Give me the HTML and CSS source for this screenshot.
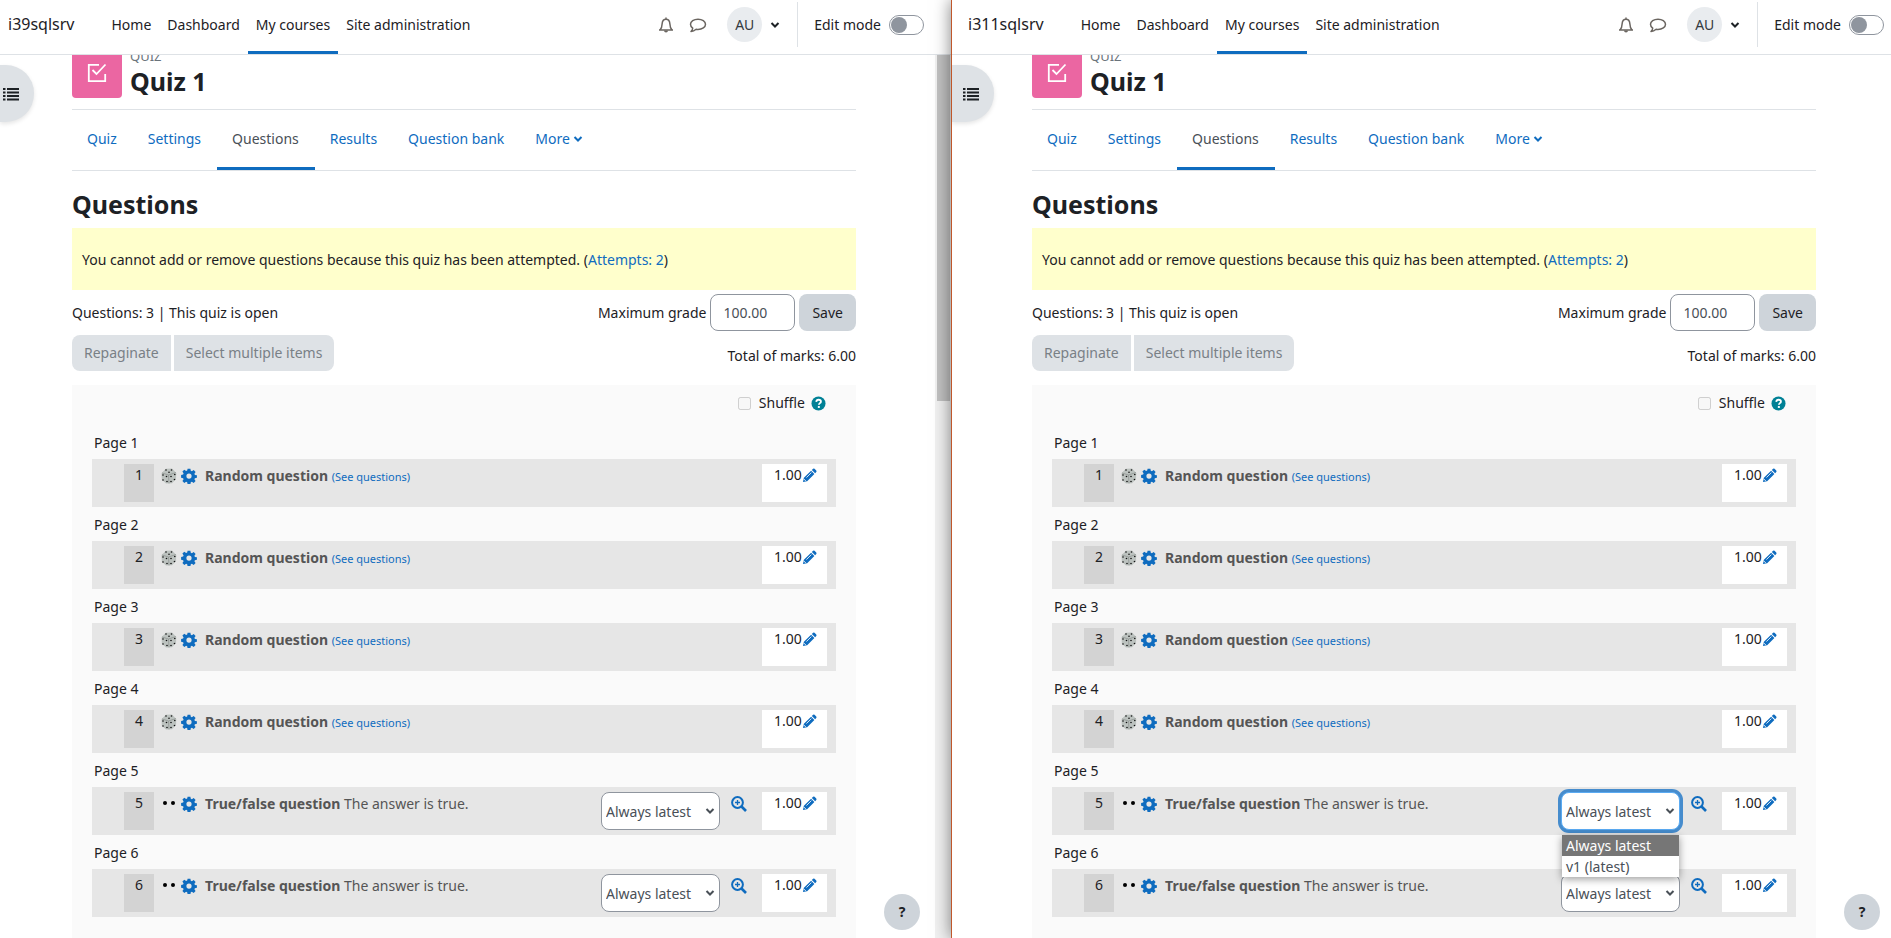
FILE: index.html
```html
<!DOCTYPE html>
<html lang="en">
<head>
<meta charset="utf-8">
<title>Quiz 1: Questions</title>
<link rel="stylesheet" href="styles.css">
</head>
<body>
<svg class="sprite" aria-hidden="true">
  <symbol id="bell" viewBox="0 0 16 16"><path d="M1 13h14M2 13c1.800-1.600 2-3.600 2.100-6C4.300 4 5.600 2.300 8 2.300S11.700 4 11.900 7c.1 2.400.3 4.400 2.100 6M8 2.300V.6" fill="none" stroke="currentColor" stroke-width="1.500"/><path d="M6 13.500a2 2 0 0 0 4 0z" fill="currentColor"/></symbol>
  <symbol id="comment" viewBox="0 0 18 16"><path d="M9 2.200c4.200 0 7.500 2.200 7.500 5.100s-3.300 5.100-7.500 5.100q-1 0-1.900-.2C5.600 13.500 4 14.300 2 14.500c1-1 1.600-1.900 1.700-3.300C2.300 10.200 1.500 8.800 1.500 7.300 1.500 4.400 4.800 2.200 9 2.200z" fill="none" stroke="currentColor" stroke-width="1.500" stroke-linejoin="round"/></symbol>
  <symbol id="caret" viewBox="0 0 10 8"><path d="M1.500 2 5 5.500 8.500 2" fill="none" stroke="currentColor" stroke-width="2"/></symbol>
  <symbol id="list" viewBox="0 0 16 14"><path d="M0 2h2.500M4 2h12M0 5.500h2.500M4 5.500h12M0 9h2.500M4 9h12M0 12.500h2.500M4 12.500h12" stroke="currentColor" stroke-width="2" fill="none"/></symbol>
  <symbol id="quizmark" viewBox="0 0 20 20"><path d="M12 1.800H1.800v16.400h16.400V11M5.500 7l4 4L18.500 1.500" fill="none" stroke="#fff" stroke-width="1.800"/></symbol>
  <symbol id="gear" viewBox="0 0 16 16"><path fill-rule="evenodd" fill="currentColor" d="M6.600.8h2.800l.4 2 1.100.5 1.800-1.200 1.900 1.900-1.200 1.800.5 1.100 2 .4v2.500l-2 .4-.5 1.100 1.200 1.800-1.900 1.900-1.800-1.200-1.100.5-.4 2H6.600l-.4-2-1.100-.5-1.800 1.200-1.900-1.900 1.200-1.800-.5-1.100-2-.4V6.900l2-.4.5-1.100-1.200-1.800 1.900-1.900 1.800 1.200 1.100-.5zM8 5.500a2.600 2.600 0 1 0 0 5.200 2.600 2.600 0 0 0 0-5.200z"/></symbol>
  <symbol id="pencil" viewBox="0 0 16 16"><path fill="currentColor" d="M1 15l1-4.500 7.700-7.700 3.500 3.500L5.500 14zM10.500 2l1.300-1.200q.8-.7 1.600 0l1.800 1.800q.7.800 0 1.600L14 5.500z"/><path d="M1.900 11.700l2.400 2.400M4.700 10.200 10 4.900" stroke="#fff" fill="none" stroke-width=".9"/></symbol>
  <symbol id="preview" viewBox="0 0 16 16"><circle cx="6.500" cy="6.500" r="5.400" fill="none" stroke="currentColor" stroke-width="2"/><path d="M10.500 10.500l4.500 4.500" stroke="currentColor" stroke-width="2.600"/><path d="M6.500 4v5M4 6.500h5" stroke="currentColor" stroke-width="1.300"/></symbol>
  <symbol id="dice" viewBox="0 0 16 16"><path d="M5 .8 11 .5 15.300 5 15 11 11 15.300 5 15.500.8 11.500.6 5z" fill="#bcc2bf"/><path d="M1 5l6.500 2L15 4.500M7.500 7 8 15.500" stroke="#8a8f8d" fill="none" stroke-width=".7"/><g fill="#111"><circle cx="5" cy="2" r=".8"/><circle cx="10.500" cy="2" r=".8"/><circle cx="8" cy="4.200" r=".8"/><circle cx="2" cy="7" r=".8"/><circle cx="5.500" cy="8.500" r=".8"/><circle cx="2" cy="12" r=".8"/><circle cx="6" cy="13.500" r=".8"/><circle cx="10" cy="8.500" r=".8"/><circle cx="13.800" cy="6.500" r=".8"/><circle cx="10" cy="13.500" r=".8"/><circle cx="13.500" cy="11.500" r=".8"/></g></symbol>
  <symbol id="dots" viewBox="0 0 16 16"><circle cx="4" cy="7" r="2" /><circle cx="12" cy="7" r="2"/></symbol>
  <symbol id="help" viewBox="0 0 16 16"><circle cx="8" cy="8" r="7.500" fill="#008196"/><path d="M5.600 6.300C5.700 4.800 6.700 4 8.100 4c1.500 0 2.500.8 2.500 2 0 1.600-2.200 1.700-2.200 3.400" fill="none" stroke="#fff" stroke-width="1.900"/><path d="M7.300 10.700h2.100v2H7.300z" fill="#fff"/></symbol>
</svg>

<div class="screen">
<section class="pane pane-left">
  <header class="navbar">
    <a class="brand" href="#">i39sqlsrv</a>
    <nav class="primary"><a href="#">Home</a><a href="#">Dashboard</a><a class="active" href="#">My courses</a><a href="#">Site administration</a></nav>
    <div class="usernav">
      <button class="plain" aria-label="Notifications"><svg class="i16"><use href="#bell"/></svg></button>
      <button class="plain" aria-label="Messages"><svg class="i18"><use href="#comment"/></svg></button>
      <button class="plain user"><span class="avatar">AU</span><svg class="chev"><use href="#caret"/></svg></button>
      <div class="editmode"><label for="edit-a">Edit mode</label><input class="switch" type="checkbox" id="edit-a"></div>
    </div>
  </header>
  <div class="body">
    <button class="drawer" aria-label="Open course index"><svg class="i16"><use href="#list"/></svg></button>
    <main class="content">
      <div class="head"><div class="modicon"><svg><use href="#quizmark"/></svg></div><div class="titles"><div class="kind">Quiz</div><h1>Quiz 1</h1></div></div>
      <nav class="tabs"><a href="#">Quiz</a><a href="#">Settings</a><a class="active" href="#">Questions</a><a href="#">Results</a><a href="#">Question bank</a><a href="#">More<svg class="chev"><use href="#caret"/></svg></a></nav>
      <h2>Questions</h2>
      <div class="notice">You cannot add or remove questions because this quiz has been attempted. (<a href="#">Attempts: 2</a>)</div>
      <div class="bar"><span>Questions: 3 | This quiz is open</span><form class="grade"><label for="max-a">Maximum grade</label><input type="text" id="max-a" value="100.00"><button type="button" class="btn">Save</button></form></div>
      <div class="bar second"><div class="group"><button class="btn" disabled>Repaginate</button><button class="btn" disabled>Select multiple items</button></div><span class="total">Total of marks: 6.00</span></div>
      <div class="slots">
        <div class="shuffle"><input type="checkbox" id="shuffle-a" disabled><label for="shuffle-a">Shuffle</label><svg><use href="#help"/></svg></div>
        <h3>Page 1</h3>
        <div class="slot"><span class="num">1</span><svg class="i16"><use href="#dice"/></svg><svg class="i16 blue"><use href="#gear"/></svg><span class="name"><b>Random question</b> <a href="#">(See questions)</a></span><span class="mark">1.00<svg><use href="#pencil"/></svg></span></div>
        <h3>Page 2</h3>
        <div class="slot"><span class="num">2</span><svg class="i16"><use href="#dice"/></svg><svg class="i16 blue"><use href="#gear"/></svg><span class="name"><b>Random question</b> <a href="#">(See questions)</a></span><span class="mark">1.00<svg><use href="#pencil"/></svg></span></div>
        <h3>Page 3</h3>
        <div class="slot"><span class="num">3</span><svg class="i16"><use href="#dice"/></svg><svg class="i16 blue"><use href="#gear"/></svg><span class="name"><b>Random question</b> <a href="#">(See questions)</a></span><span class="mark">1.00<svg><use href="#pencil"/></svg></span></div>
        <h3>Page 4</h3>
        <div class="slot"><span class="num">4</span><svg class="i16"><use href="#dice"/></svg><svg class="i16 blue"><use href="#gear"/></svg><span class="name"><b>Random question</b> <a href="#">(See questions)</a></span><span class="mark">1.00<svg><use href="#pencil"/></svg></span></div>
        <h3>Page 5</h3>
        <div class="slot"><span class="num">5</span><svg class="i16"><use href="#dots"/></svg><svg class="i16 blue"><use href="#gear"/></svg><span class="name"><b>True/false question</b> The answer is true.</span><div class="version"><select aria-label="Question version"><option>Always latest</option><option>v1 (latest)</option></select><svg class="chev"><use href="#caret"/></svg></div><svg class="i16 blue zoom"><use href="#preview"/></svg><span class="mark">1.00<svg><use href="#pencil"/></svg></span></div>
        <h3>Page 6</h3>
        <div class="slot"><span class="num">6</span><svg class="i16"><use href="#dots"/></svg><svg class="i16 blue"><use href="#gear"/></svg><span class="name"><b>True/false question</b> The answer is true.</span><div class="version"><select aria-label="Question version"><option>Always latest</option><option>v1 (latest)</option></select><svg class="chev"><use href="#caret"/></svg></div><svg class="i16 blue zoom"><use href="#preview"/></svg><span class="mark">1.00<svg><use href="#pencil"/></svg></span></div>
      </div>
    </main>
    <div class="scrollbar"><div class="thumb"></div></div>
    <button class="helpbtn">?</button>
  </div>
</section>

<section class="pane pane-right">
  <header class="navbar">
    <a class="brand" href="#">i311sqlsrv</a>
    <nav class="primary"><a href="#">Home</a><a href="#">Dashboard</a><a class="active" href="#">My courses</a><a href="#">Site administration</a></nav>
    <div class="usernav">
      <button class="plain" aria-label="Notifications"><svg class="i16"><use href="#bell"/></svg></button>
      <button class="plain" aria-label="Messages"><svg class="i18"><use href="#comment"/></svg></button>
      <button class="plain user"><span class="avatar">AU</span><svg class="chev"><use href="#caret"/></svg></button>
      <div class="editmode"><label for="edit-b">Edit mode</label><input class="switch" type="checkbox" id="edit-b"></div>
    </div>
  </header>
  <div class="body">
    <button class="drawer" aria-label="Open course index"><svg class="i16"><use href="#list"/></svg></button>
    <main class="content">
      <div class="head"><div class="modicon"><svg><use href="#quizmark"/></svg></div><div class="titles"><div class="kind">Quiz</div><h1>Quiz 1</h1></div></div>
      <nav class="tabs"><a href="#">Quiz</a><a href="#">Settings</a><a class="active" href="#">Questions</a><a href="#">Results</a><a href="#">Question bank</a><a href="#">More<svg class="chev"><use href="#caret"/></svg></a></nav>
      <h2>Questions</h2>
      <div class="notice">You cannot add or remove questions because this quiz has been attempted. (<a href="#">Attempts: 2</a>)</div>
      <div class="bar"><span>Questions: 3 | This quiz is open</span><form class="grade"><label for="max-b">Maximum grade</label><input type="text" id="max-b" value="100.00"><button type="button" class="btn">Save</button></form></div>
      <div class="bar second"><div class="group"><button class="btn" disabled>Repaginate</button><button class="btn" disabled>Select multiple items</button></div><span class="total">Total of marks: 6.00</span></div>
      <div class="slots">
        <div class="shuffle"><input type="checkbox" id="shuffle-b" disabled><label for="shuffle-b">Shuffle</label><svg><use href="#help"/></svg></div>
        <h3>Page 1</h3>
        <div class="slot"><span class="num">1</span><svg class="i16"><use href="#dice"/></svg><svg class="i16 blue"><use href="#gear"/></svg><span class="name"><b>Random question</b> <a href="#">(See questions)</a></span><span class="mark">1.00<svg><use href="#pencil"/></svg></span></div>
        <h3>Page 2</h3>
        <div class="slot"><span class="num">2</span><svg class="i16"><use href="#dice"/></svg><svg class="i16 blue"><use href="#gear"/></svg><span class="name"><b>Random question</b> <a href="#">(See questions)</a></span><span class="mark">1.00<svg><use href="#pencil"/></svg></span></div>
        <h3>Page 3</h3>
        <div class="slot"><span class="num">3</span><svg class="i16"><use href="#dice"/></svg><svg class="i16 blue"><use href="#gear"/></svg><span class="name"><b>Random question</b> <a href="#">(See questions)</a></span><span class="mark">1.00<svg><use href="#pencil"/></svg></span></div>
        <h3>Page 4</h3>
        <div class="slot"><span class="num">4</span><svg class="i16"><use href="#dice"/></svg><svg class="i16 blue"><use href="#gear"/></svg><span class="name"><b>Random question</b> <a href="#">(See questions)</a></span><span class="mark">1.00<svg><use href="#pencil"/></svg></span></div>
        <h3>Page 5</h3>
        <div class="slot"><span class="num">5</span><svg class="i16"><use href="#dots"/></svg><svg class="i16 blue"><use href="#gear"/></svg><span class="name"><b>True/false question</b> The answer is true.</span><div class="version open"><select aria-label="Question version"><option>Always latest</option><option>v1 (latest)</option></select><svg class="chev"><use href="#caret"/></svg><ul class="menu" role="listbox"><li role="option" aria-selected="true">Always latest</li><li role="option">v1 (latest)</li></ul></div><svg class="i16 blue zoom"><use href="#preview"/></svg><span class="mark">1.00<svg><use href="#pencil"/></svg></span></div>
        <h3>Page 6</h3>
        <div class="slot"><span class="num">6</span><svg class="i16"><use href="#dots"/></svg><svg class="i16 blue"><use href="#gear"/></svg><span class="name"><b>True/false question</b> The answer is true.</span><div class="version"><select aria-label="Question version"><option>Always latest</option><option>v1 (latest)</option></select><svg class="chev"><use href="#caret"/></svg></div><svg class="i16 blue zoom"><use href="#preview"/></svg><span class="mark">1.00<svg><use href="#pencil"/></svg></span></div>
      </div>
    </main>
    <button class="helpbtn">?</button>
  </div>
</section>
</div>
</body>
</html>
```
FILE: styles.css
```css
* { box-sizing: border-box; }
body { margin: 0; font: 14px/22px "Noto Sans", "Open Sans", sans-serif; color: #1d2125; background: #fff; overflow: hidden; }
a { color: #0f6cbf; text-decoration: none; }
h1, h2, h3 { margin: 0; }
button, input, select { font: inherit; color: inherit; }
svg { flex: none; display: block; }
.sprite { position: absolute; width: 0; height: 0; }
.i16 { width: 16px; height: 16px; }
.i18 { width: 18px; height: 16px; }
.chev { width: 10px; height: 8px; }
.blue { color: #0f6cbf; }

.screen { display: grid; grid-template-columns: 951fr 940fr; height: 100vh; }
.pane { display: flex; flex-direction: column; min-width: 0; min-height: 0; background: #fff; }
.pane-right { position: relative; z-index: 2; border-left: 1px solid #c0572b; box-shadow: 0 0 16px rgba(0, 0, 0, .5); }

.navbar { display: flex; flex: none; height: 55px; padding: 0 27px 0 8px; border-bottom: 1px solid #dee2e6; align-items: stretch; }
.pane-right .navbar { padding: 0 7px 0 16px; }
.brand { font-size: 16px; line-height: 49px; color: #1d2125; margin-right: 29px; }
.primary { display: flex; }
.primary a { padding: 0 8px; line-height: 49px; color: #1d2125; white-space: nowrap; }
.primary .active { border-bottom: 3px solid #0f6cbf; }
.usernav { display: flex; align-items: center; margin-left: auto; height: 49px; }
.plain { border: 0; background: none; padding: 0; color: #6a6560; margin-right: 15px; }
.user { display: flex; align-items: center; gap: 8px; color: #1d2125; margin: 0 17px 0 5px; }
.avatar { width: 35px; height: 35px; line-height: 35px; border-radius: 50%; background: #e9ecef; text-align: center; color: #343a40; }
.editmode { display: flex; align-items: center; gap: 8px; height: 45px; padding-left: 16px; border-left: 1px solid #dee2e6; }
.switch { appearance: none; width: 35px; height: 20px; margin: 0; border: 1px solid #8f959e; border-radius: 10px; background: #fff; }
.switch::before { content: ""; display: block; width: 16px; height: 16px; margin: 1px; border-radius: 50%; background: #8f959e; }

.body { position: relative; flex: 1; min-height: 0; overflow: hidden; display: flex; }
.drawer { position: absolute; left: 0; top: 10px; width: 34px; height: 57px; border: 0; padding: 0 0 0 3px; border-radius: 0 28px 28px 0; background: #dee2e6; box-shadow: 0 2px 4px rgba(0, 0, 0, .1); }
.pane-right .drawer { width: 42px; padding-left: 11px; }
.content { flex: 1; min-width: 0; margin: 0 79px 0 72px; }
.pane-right .content { margin: 0 75px 0 80px; }
.helpbtn { position: absolute; right: 31px; bottom: 8px; width: 36px; height: 36px; border: 0; padding: 0; border-radius: 50%; background: #ced4da; font-weight: 700; }
.pane-right .helpbtn { right: 11px; }
.scrollbar { width: 16px; padding: 0 1px 0 2px; background: #f1f1f1; }
.thumb { height: 346px; background: #c1c1c1; }

.head { display: flex; gap: 8px; margin-top: -7px; height: 62px; border-bottom: 1px solid #dee2e6; }
.modicon { display: grid; place-items: center; width: 50px; height: 50px; border-radius: 4px; background: #eb66a2; }
.modicon svg { width: 20px; height: 20px; }
.kind { font-size: 13px; line-height: 16px; text-transform: uppercase; color: #6a737b; }
h1, h2 { font-size: 25px; line-height: 34px; font-weight: 700; }
.tabs { display: flex; height: 61px; border-bottom: 1px solid #dee2e6; }
.tabs a { display: flex; align-items: center; gap: 3px; padding: 0 16px 0 15px; border-bottom: 3px solid transparent; }
.tabs .active { color: #495057; border-color: #0f6cbf; }
h2 { margin: 16px 0 7px; }
.notice { padding: 21px 10px 19px; background: #ffffcc; }
.bar { display: flex; justify-content: space-between; align-items: center; height: 37px; margin-top: 4px; }
.second { height: 36px; }
.grade { display: flex; align-items: center; gap: 4px; }
.grade input { width: 85px; height: 37px; padding: 0 12px; border: 1px solid #8f959e; border-radius: 8px; color: #495057; background: #fff; }
.btn { height: 37px; padding: 0 13px; border: 0; border-radius: 8px; background: #ced4da; }
.btn:disabled { height: 36px; padding: 0 12px; background: #dee2e6; color: #798086; }
.group { display: flex; gap: 3px; }
.group .btn:first-child { border-radius: 8px 0 0 8px; }
.group .btn:last-child { border-radius: 0 8px 8px 0; }
.total { padding-top: 6px; }

.slots { margin-top: 14px; padding: 7px 20px 60px; background: #fafafa; }
.shuffle { display: flex; align-items: center; justify-content: flex-end; height: 22px; padding-right: 10px; margin-bottom: 11px; }
.shuffle input { margin: 0 8px 0 0; width: 13px; height: 13px; }
.shuffle svg { width: 15px; height: 15px; margin-left: 6px; }
h3 { font-size: 14px; font-weight: 400; line-height: 22px; height: 34px; padding: 7px 2px 0; }
.slot { display: flex; align-items: flex-start; height: 48px; padding: 5px 9px 5px 32px; background: #e6e6e6; }
.slot > .i16 { margin: 4px 0 0 4px; }
.slot > .num + .i16 { margin-left: 7px; }
.num { width: 30px; height: 38px; text-align: center; background: #d3d3d3; }
.name { flex: 1; margin-left: 8px; color: #555; line-height: 24px; white-space: nowrap; }
.name a { font-size: 11px; }
.mark { display: flex; gap: 0; width: 65px; height: 38px; padding-left: 12px; background: #fff; }
.mark svg { width: 15px; height: 15px; margin-top: 4px; color: #0f6cbf; }
.slot > .zoom { margin: 4px 15px 0 11px; }
.version { position: relative; width: 119px; }
.version select { display: block; appearance: none; width: 100%; height: 38px; padding: 2px 4px 0; border: 1px solid #8f959e; border-radius: 8px; background: #fff; color: #495057; outline: 0; }
.version .chev { position: absolute; right: 5px; top: 15px; color: #495057; }
.open select { border-color: #5babf2; box-shadow: 0 0 0 3px #468ccd; }
.menu { position: absolute; z-index: 3; left: 1px; top: 43px; width: 117px; margin: 0; padding: 0; list-style: none; background: #fff; color: #495057; box-shadow: 0 2px 8px rgba(0, 0, 0, .4); }
.menu li { height: 21px; line-height: 21px; padding: 0 4px; }
.menu li[aria-selected] { background: #767676; color: #fff; }
```
